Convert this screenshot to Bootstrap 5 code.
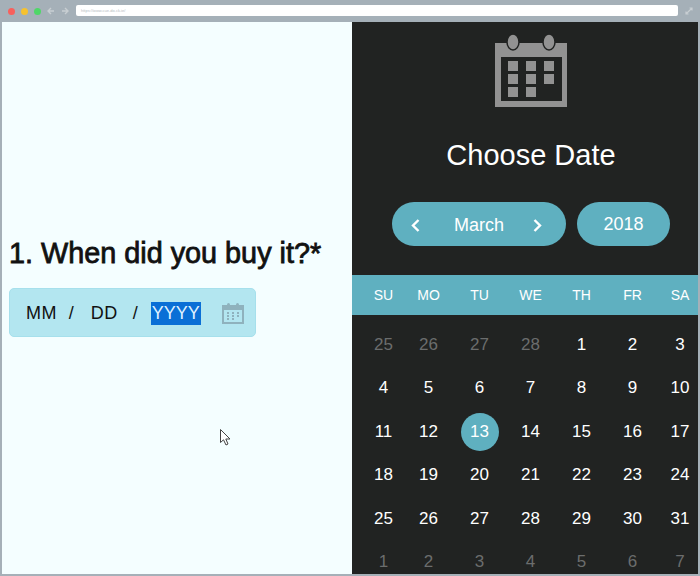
<!DOCTYPE html>
<html lang="en">
<head>
  <meta charset="UTF-8" />
  <title>Choose Date</title>
  <link href="https://cdn.jsdelivr.net/npm/bootstrap@5.3.0/dist/css/bootstrap.min.css" rel="stylesheet" />
  <style>
    html, body { height: 576px; overflow: hidden; }
    body { background: #a5b0b8; font-family: "Liberation Sans", Arial, sans-serif; }
    .shell { width: 700px; height: 576px; padding: 0 2px 2px; }
    .chrome-bar { height: 22px; padding: 5px 0 0 6px; }
    .dot { width: 7px; height: 7px; border-radius: 50%; margin-top: 3px; }
    .dot-red { background: #f8605c; }
    .dot-yellow { background: #f6c22f; }
    .dot-green { background: #4fd768; }
    .arrows { margin: 2px 0 0 6px; }
    .url-box { width: 602px; height: 11px; background: #fff; border-radius: 2px; margin-left: 7px; font-size: 4px; line-height: 11px; color: #b5bcc2; padding-left: 5px; }
    .expand { margin: 2px 0 0 7px; }
    .left-pane { width: 350px; background: #f4feff; padding: 216px 0 0 7px; }
    .question { font-size: 28.800px; line-height: 30px; font-weight: 400; color: #111; margin: 0 0 20px; white-space: nowrap; -webkit-text-stroke: 0.8px #111; }
    .date-box { width: 247px; height: 49px; background: #b3e6f0; border: 1px solid #a6e0ec; border-radius: 5px; padding: 2px 10px 0 16px; font-size: 18px; color: #111; }
    .field-text { letter-spacing: .4px; }
    .yyyy { background: #0a6fd6; color: #dff1ff; line-height: 23px; padding: 0 1px; }
    .right-pane { width: 346px; background: #212322; color: #fff; }
    .big-cal { width: 72px; height: 73px; margin-top: 12px; display: block; }
    .choose { font-size: 29px; line-height: 32px; margin: 32px 0 0; }
    .pill-row { padding-left: 40px; margin-top: 31px; gap: 11px; }
    .date-pill { height: 44px; border-radius: 22px; background: #5fb0c0; font-size: 18px; color: #fff; }
    .pill-month { width: 174px; padding: 2px 24px 0 19px; }
    .pill-month span { margin-left: 5px; }
    .pill-year { width: 93px; }
    .dow-strip { height: 40px; background: #5fb0c0; margin-top: 29px; font-size: 14px; }
    .cal-grid { display: grid; grid-template-columns: 39px repeat(5, 51px) 39px; margin-left: 12px; align-items: center; justify-items: center; }
    .cal-grid > div:nth-child(7n) { padding-left: 5px; }
    .day-rows { grid-auto-rows: 43.500px; font-size: 17px; padding-top: 8px; }
    .day-rows > div { width: 38px; height: 38px; line-height: 38px; text-align: center; white-space: nowrap; display: flex; justify-content: center; }
    .muted-day { color: #6b6d6d; }
    .today-day { background: #5fb0c0; border-radius: 50%; }
    .mouse-arrow { position: absolute; left: 219px; top: 428px; width: 13px; height: 19px; }
  </style>
</head>
<body>
  <div class="shell position-relative">
    <!-- browser bar -->
    <div class="chrome-bar d-flex align-items-start">
      <div class="d-flex" style="gap:6px">
        <span class="dot dot-red"></span><span class="dot dot-yellow"></span><span class="dot dot-green"></span>
      </div>
      <svg width="22" height="8" viewBox="0 0 22 8" class="arrows" fill="none" stroke="#c8ced2" stroke-width="1.4">
        <path d="M7 4H1M4 1L1 4l3 3M15 4h6M18 1l3 3-3 3" />
      </svg>
      <div class="url-box">https://www.cue-do.ck.ie/</div>
      <svg width="8" height="8" viewBox="0 0 8 8" class="expand" fill="none" stroke="#c8ced2" stroke-width="1.2">
        <path d="M1 7l6-6M4.500 1H7v2.500M1 4.500V7h2.500" />
      </svg>
    </div>

    <div class="d-flex" style="height:552px">
      <!-- question -->
      <div class="left-pane">
        <h1 class="question">1. When did you buy it?*</h1>
        <div class="date-box d-flex align-items-center">
          <span class="field-text">MM</span><span style="margin-left:12px">/</span>
          <span class="field-text" style="margin-left:17px">DD</span><span style="margin-left:15px">/</span>
          <span class="yyyy" style="margin-left:13px">YYYY</span>
          <svg width="24" height="23" viewBox="0 0 24 23" class="ms-auto">
            <rect x="1" y="3" width="22" height="19" fill="#8fb2bd" />
            <rect x="3" y="8" width="18" height="12" fill="#b3e6f0" />
            <rect x="6" y="1" width="3" height="4" rx="1.500" fill="#8fb2bd" />
            <rect x="15" y="1" width="3" height="4" rx="1.500" fill="#8fb2bd" />
            <path d="M6 10h2v2H6zM11 10h2v2h-2zM16 10h2v2h-2zM6 13h2v2H6zM11 13h2v2h-2zM16 13h2v2h-2zM6 16h2v2H6zM11 16h2v2h-2z" fill="#8fb2bd" />
          </svg>
        </div>
      </div>

      <!-- date picker -->
      <div class="right-pane">
        <div class="d-flex flex-column align-items-center" style="padding-left:12px">
          <svg class="big-cal" viewBox="0 0 72 73">
            <rect x="0" y="9" width="72" height="64" fill="#929292" />
            <rect x="6" y="23" width="61" height="44" fill="#212322" />
            <ellipse cx="18" cy="8" rx="6" ry="8" fill="#929292" stroke="#212322" stroke-width="1.500" />
            <ellipse cx="54" cy="8" rx="6" ry="8" fill="#929292" stroke="#212322" stroke-width="1.500" />
            <path fill="#929292" d="M13 27h10v10H13zM31 27h10v10H31zM49 27h10v10H49zM13 40h10v10H13zM31 40h10v10H31zM49 40h10v10H49zM13 53h10v10H13zM31 53h10v10H31z" />
          </svg>
          <div class="choose">Choose Date</div>
        </div>

        <div class="pill-row d-flex">
          <div class="date-pill pill-month d-flex align-items-center justify-content-between">
            <svg width="9" height="13" viewBox="0 0 9 13" fill="none" stroke="#fff" stroke-width="2.400"><path d="M7.500 1L2 6.500l5.500 5.500" /></svg>
            <span>March</span>
            <svg width="9" height="13" viewBox="0 0 9 13" fill="none" stroke="#fff" stroke-width="2.400"><path d="M1.500 1L7 6.500l-5.500 5.500" /></svg>
          </div>
          <div class="date-pill pill-year d-flex align-items-center justify-content-center">2018</div>
        </div>

        <div class="dow-strip">
          <div class="cal-grid h-100">
            <div>SU</div><div>MO</div><div>TU</div><div>WE</div><div>TH</div><div>FR</div><div>SA</div>
          </div>
        </div>

        <div class="cal-grid day-rows" id="days"></div>
      </div>
    </div>

    <!-- mouse pointer -->
    <svg class="mouse-arrow" viewBox="0 0 13 19" fill="#fff" stroke="#444" stroke-width="1">
      <path d="M1.500 1.500V14.500L4.500 11.800 7 17 9 16 6.800 11H11z" />
    </svg>
  </div>

  <script>
    // 25 Feb .. 7 Apr, laid out week by week
    const days = [];
    for (let d = 25; d <= 28; d++) days.push([d, 'muted-day']);
    for (let d = 1; d <= 31; d++) days.push([d, d === 13 ? 'today-day' : '']);
    for (let d = 1; d <= 7; d++) days.push([d, 'muted-day']);
    const box = document.getElementById('days');
    days.forEach(function (item) {
      const cell = document.createElement('div');
      cell.textContent = item[0];
      if (item[1]) cell.className = item[1];
      box.appendChild(cell);
    });
  </script>
</body>
</html>
